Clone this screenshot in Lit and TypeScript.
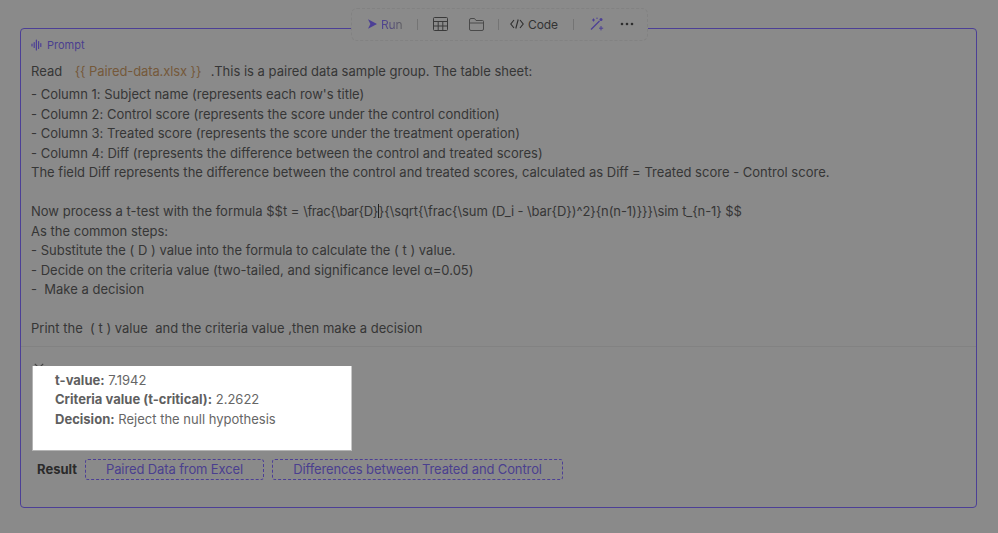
import { LitElement, html, css } from "lit";
import { customElement } from "lit/decorators.js";

@customElement("app-root")
export class AppRoot extends LitElement {
  static styles = css`
    :host { display: block; width: 998px; height: 533px; background: #8a8a8a; font-family: Inter, "Noto Sans", sans-serif; font-size: 13px; letter-spacing: .008px; color: #363636; overflow: hidden; position: relative; box-sizing: border-box; padding: 28px 21px 0 20px; }
    * { box-sizing: border-box; }
    .card { height: 480px; border: 1px solid #4c3f96; border-radius: 4px; display: flex; flex-direction: column; }
    .toolbar { position: absolute; left: 351px; top: 8px; width: 297px; height: 33px; padding: 0 0 1px 16px; background: #8a8a8a; border: 1px dashed #828282; border-radius: 6px; display: flex; align-items: center; color: #333; font-size: 12px; letter-spacing: -.1px; }
    .run { display: flex; align-items: center; gap: 4px; width: 49px; }
    .run span { background: linear-gradient(90deg, #4c3f96, #5e5e5e); -webkit-background-clip: text; background-clip: text; color: transparent; }
    .sep { width: 1px; height: 11px; background: #747474; }
    .ic { display: block; }
    .code { display: flex; align-items: center; gap: 4px; margin-left: 11px; }
    .m15 { margin-left: 15px; } .m14 { margin-left: 14px; } .m16 { margin-left: 16px; } .m21 { margin-left: 21px; }
    .head { display: flex; align-items: center; gap: 4px; color: #4a3f8f; font-size: 11px; height: 14px; margin: 9px 0 0 10px; }
    .prompt { padding: 0 10px; margin-top: 10px; line-height: 19.5px; white-space: pre; height: 283.5px; }
    .first { height: 23px; display: flex; }
    .var { color: #75593a; margin-left: 12.5px; margin-right: 9.5px; letter-spacing: -.12px; }
    .caret { display: inline-block; width: 1px; height: 14px; background: #222; vertical-align: -2px; }
    .m1 { letter-spacing: -.42px; }
    .m2 { letter-spacing: -.1px; }
    .divider { height: 1px; background: #828282; }
    .chev { position: absolute; left: 34px; top: 363px; }
    .out { width: 320px; height: 85px; margin: 19px 0 0 11px; background: #fff; border: 1px solid #b4b4b4; border-top: 0; border-right-color: #c8c8c8; color: #666; padding: 5px 0 0 22px; line-height: 19.5px; position: relative; }
    .out b { font-weight: 700; color: #5f5f5f; }
    .result { display: flex; align-items: center; margin: 8px 0 0 16px; height: 21px; }
    .result b { font-weight: 700; color: #2a2a2a; margin-right: 8px; }
    .btn { border: 1px dashed #4c3f96; border-radius: 3px; height: 21px; color: #4a3f8f; display: flex; align-items: center; justify-content: center; letter-spacing: -.12px; }
    .b1 { width: 179px; margin-right: 8px; }
    .b2 { width: 291px; }
  `;

  render() {
    const body = `- Column 1: Subject name (represents each row's title)
- Column 2: Control score (represents the score under the control condition)
- Column 3: Treated score (represents the score under the treatment operation)
- Column 4: Diff (represents the difference between the control and treated scores)
The field Diff represents the difference between the control and treated scores, calculated as Diff = Treated score - Control score.

`;
    const rest = `
As the common steps:
- Substitute the ( D ) value into the formula to calculate the ( t ) value.
- Decide on the criteria value (two-tailed, and significance level α=0.05)
-  Make a decision

Print the  ( t ) value  and the criteria value ,then make a decision`;
    return html`
      <svg class="chev" width="10" height="6" viewBox="0 0 10 6" fill="none" stroke="#444" stroke-width="1.2"><path d="M.8 .8L5 5l4.2-4.2"/></svg>
      <div class="card">
        <div class="head">
          <svg class="ic" width="12" height="12" viewBox="0 0 12 12" fill="none" stroke="#4c3f96" stroke-width="1.2" stroke-linecap="round"><path d="M1 5v2M3.2 3.5v5M5.4 1v10M7.6 2.5v7M9.8 4.5v3"/></svg>
          Prompt
        </div>
        <div class="prompt"><div class="first">Read<span class="var">{{ Paired-data.xlsx }}</span>.This is a paired data sample group. The table sheet:</div>${body}Now process a t-test with the formula $$t = <span class="m1">\\frac{\\bar{D}</span><span class="caret"></span><span class="m2">}{\\sqrt{\\frac{\\sum (D_i - \\bar{D})^2}{n(n-1)}}}\\sim t_{n-1} $$</span>${rest}</div>
        <div class="divider"></div>
        <div class="out">
          <div><b>t-value:</b> 7.1942</div>
          <div><b>Criteria value (t-critical):</b> 2.2622</div>
          <div><b>Decision:</b> Reject the null hypothesis</div>
        </div>
        <div class="result"><b>Result</b><div class="btn b1">Paired Data from Excel</div><div class="btn b2">Differences between Treated and Control</div></div>
      </div>
      <div class="toolbar">
        <div class="run"><svg class="ic" width="9" height="10" viewBox="0 0 9 10" fill="#4c3f96"><path d="M0 .3L9 5 0 9.7 2.4 5z"/></svg><span>Run</span></div>
        <div class="sep"></div>
        <svg class="ic m15" width="15" height="14" viewBox="0 0 15 14" fill="none" stroke="#3a3a3a" stroke-width="1"><rect x=".5" y=".5" width="14" height="13" rx="1"/><path d="M.5 4.5h14M.5 9h14M5.2 4.5V13.5M9.8 4.5V13.5"/></svg>
        <svg class="ic m21" width="15" height="13" viewBox="0 0 15 13" fill="none" stroke="#4a4a4a" stroke-width="1"><path d="M.5 11V2a1.5 1.5 0 0 1 1.5-1.5h3.5L7 2.5h6.5a1 1 0 0 1 1 1V11a1.5 1.5 0 0 1-1.5 1.5H2A1.5 1.5 0 0 1 .5 11zM.5 5h14"/></svg>
        <div class="sep m14"></div>
        <div class="code"><svg class="ic" width="14" height="10" viewBox="0 0 14 10" fill="none" stroke="#2e2e2e" stroke-width="1.1"><path d="M4 1L.8 5 4 9M10 1l3.2 4L10 9M8.2 .5L5.8 9.5"/></svg>Code</div>
        <div class="sep m15"></div>
        <svg class="ic m16" width="14" height="14" viewBox="0 0 14 14" fill="none" stroke="#4c3f96" stroke-width="1.3"><path d="M1 12.5L9.5 4"/><circle cx="11" cy="2.6" r="1.5" fill="#4c3f96" stroke="none"/><path stroke-width="1" d="M11 9v4.4M9 11.2h4.2M3.5 1.5v3M2 3h3"/><circle cx="7" cy="1.2" r=".7" fill="#4c3f96" stroke="none"/></svg>
        <svg class="ic m16" width="14" height="4" viewBox="0 0 14 4" fill="#2e2e2e"><circle cx="2" cy="2" r="1.3"/><circle cx="7" cy="2" r="1.3"/><circle cx="12" cy="2" r="1.3"/></svg>
      </div>
    `;
  }
}
